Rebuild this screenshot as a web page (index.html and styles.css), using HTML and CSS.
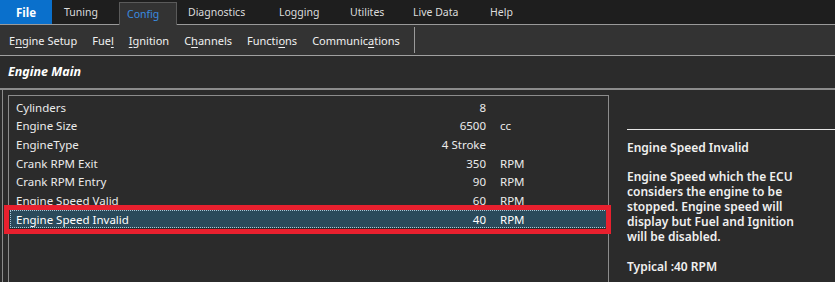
FILE: index.html
```html
<!DOCTYPE html>
<html lang="en">
<head>
  <meta charset="UTF-8" />
  <title>Engine Main</title>
  <link rel="stylesheet" href="styles.css">
</head>
<body>
  <div class="menubar">
    <span class="tab file">File</span>
    <span class="tab t-tuning">Tuning</span>
    <span class="tab active">Config</span>
    <span class="tab t-diag">Diagnostics</span>
    <span class="tab t-log">Logging</span>
    <span class="tab t-util">Utilites</span>
    <span class="tab t-live">Live Data</span>
    <span class="tab t-help">Help</span>
  </div>

  <div class="toolbar">
    <span class="tool">E<u>n</u>gine Setup</span>
    <span class="tool">Fue<u>l</u></span>
    <span class="tool"><u>I</u>gnition</span>
    <span class="tool">C<u>h</u>annels</span>
    <span class="tool">Functi<u>o</u>ns</span>
    <span class="tool">Communic<u>a</u>tions</span>
    <span class="sep"></span>
  </div>

  <div class="page-title">Engine Main</div>

  <div class="content">
    <div class="group">
      <div class="list">
        <div class="row"><span class="name">Cylinders</span><span class="val">8</span><span class="unit"></span></div>
        <div class="row"><span class="name">Engine Size</span><span class="val">6500</span><span class="unit">cc</span></div>
        <div class="row"><span class="name">EngineType</span><span class="val">4 Stroke</span><span class="unit"></span></div>
        <div class="row"><span class="name">Crank RPM Exit</span><span class="val">350</span><span class="unit">RPM</span></div>
        <div class="row"><span class="name">Crank RPM Entry</span><span class="val">90</span><span class="unit">RPM</span></div>
        <div class="row"><span class="name">Engine Speed Valid</span><span class="val">60</span><span class="unit">RPM</span></div>
        <div class="row selected"><span class="name">Engine Speed Invalid</span><span class="val">40</span><span class="unit">RPM</span></div>
        <div class="highlight"></div>
      </div>

      <div class="help">
        <div class="help-rule"></div>
        <div class="help-title">Engine Speed Invalid</div>
        <p class="help-text">Engine Speed which the ECU<br>considers the engine to be<br>stopped. Engine speed will<br>display but Fuel and Ignition<br>will be disabled.</p>
        <p class="help-typical">Typical :40 RPM</p>
      </div>
    </div>
  </div>
</body>
</html>
```

FILE: styles.css
```css
html, body {
  margin: 0;
  height: 100%;
}
body {
  font-family: 'Noto Sans', 'Open Sans', sans-serif;
  font-size: 12px;
  color: #ececec;
  background: #2b2b2b;
  overflow: hidden;
}
.menubar {
  display: flex;
  height: 24px;
  background: #1e1e1e;
  border-bottom: 1px solid #9a9a9a;
}
.tab {
  box-sizing: border-box;
  display: flex;
  align-items: center;
  height: 24px;
  padding-left: 11px;
  color: #dcdcdc;
  font-size: 10.5px;
}
.tab.file {
  width: 52px;
  padding-left: 0;
  justify-content: center;
  background: #0a70cc;
  color: #fff;
  font-weight: bold;
  font-size: 11.5px;
}
.t-tuning { width: 67px; padding-left: 12px; }
.tab.active {
  width: 58px;
  margin-top: 2px;
  height: 23px;
  padding-left: 7px;
  background: #333333;
  border: 1px solid #5a5a5a;
  border-bottom: none;
  color: #3a8ce0;
  margin-bottom: -1px;
  z-index: 1;
}
.t-diag { width: 91px; }
.t-log { width: 71px; }
.t-util { width: 63px; }
.t-live { width: 77px; }
.t-help { width: 40px; }

.toolbar {
  display: flex;
  align-items: center;
  height: 30px;
  background: #333333;
  border-bottom: 1px solid #a0a0a0;
  padding-left: 9px;
  font-size: 11px;
  color: #f0f0f0;
}
.tool {
  margin-right: 15px;
}
.tool u {
  text-underline-offset: 2px;
}
.sep {
  width: 1px;
  height: 26px;
  background: #9a9a9a;
  margin-left: -1px;
}

.page-title {
  height: 32px;
  line-height: 32px;
  padding-left: 8px;
  font-weight: bold;
  font-style: italic;
  font-size: 12.5px;
  color: #ffffff;
  border-bottom: 2px solid #8c8c8c;
}

.content {
  padding-left: 2px;
  height: 200px;
}
.group {
  display: flex;
  height: 100%;
  border-left: 1px solid #8c8c8c;
  padding: 5px 0 0 5px;
}
.list {
  position: relative;
  width: 598px;
  border: 1px solid #8c8c8c;
  border-bottom: none;
  padding: 2px 0 0 1px;
  font-size: 11.5px;
}
.row {
  box-sizing: border-box;
  display: flex;
  height: 18.65px;
  align-items: center;
  margin-right: 1px;
  border: 1px solid transparent;
}
.row .name {
  width: 420px;
  padding-left: 5px;
}
.row .val {
  width: 50px;
  text-align: right;
}
.row .unit {
  padding-left: 14px;
}
.row.selected {
  background: #2a4a5b;
  border: 1px dotted #a8c8d8;
  color: #ffffff;
}
.highlight {
  position: absolute;
  left: -5px;
  top: 109px;
  width: 597px;
  height: 19px;
  border: 5px solid #e8202e;
}

.help {
  flex: 1;
  padding-left: 18px;
  font-weight: 600;
  color: #f0f0f0;
}
.help-rule {
  height: 1px;
  background: #e6e6e6;
  margin-top: 34px;
}
.help-title {
  margin-top: 10px;
  line-height: 16px;
}
.help-text {
  margin: 13px 0 0;
  line-height: 15px;
}
.help-typical {
  margin: 14px 0 0;
}
```
